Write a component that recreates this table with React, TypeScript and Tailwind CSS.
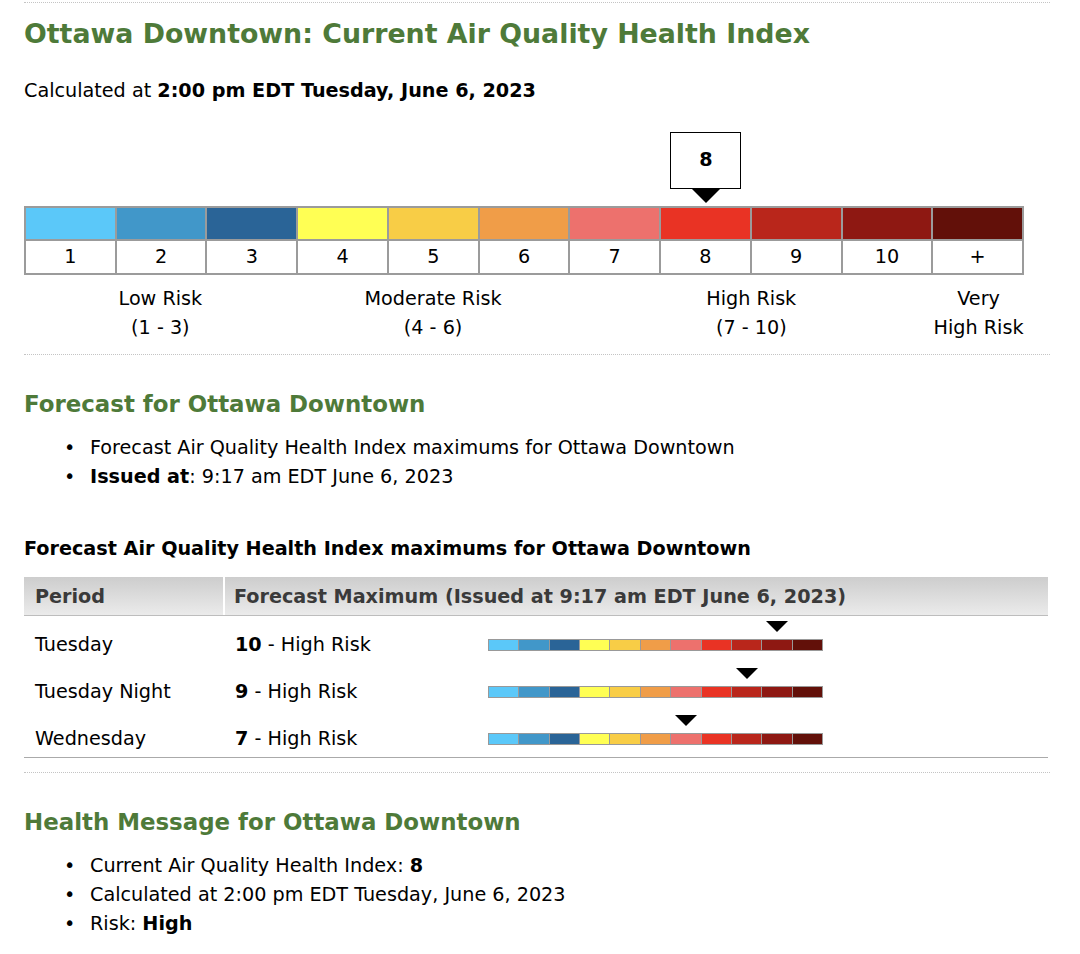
const colors = [
  'bg-[#5bc8f9]',
  'bg-[#4197c9]',
  'bg-[#2a6497]',
  'bg-[#ffff54]',
  'bg-[#f8cd46]',
  'bg-[#f09d48]',
  'bg-[#ed716d]',
  'bg-[#e93324]',
  'bg-[#b9261b]',
  'bg-[#8e1812]',
  'bg-[#621009]',
];

const labels = ['1', '2', '3', '4', '5', '6', '7', '8', '9', '10', '+'];

const colStart: Record<number, string> = {
  7: 'col-start-7',
  8: 'col-start-8',
  9: 'col-start-9',
  10: 'col-start-10',
};

const forecast = [
  { period: 'Tuesday', value: 10 },
  { period: 'Tuesday Night', value: 9 },
  { period: 'Wednesday', value: 7 },
];

function Dotted() {
  return <div className="h-0 border-t border-dotted border-[#c4c4c4]" />;
}

function Bullets({ items }: { items: React.ReactNode[] }) {
  return (
    <ul className="mt-[14px] pl-[40px] leading-[29px]">
      {items.map((item, i) => (
        <li key={i} className="flex">
          <span className="w-[26px] shrink-0">•</span>
          <span>{item}</span>
        </li>
      ))}
    </ul>
  );
}

function MiniScale({ value }: { value: number }) {
  return (
    <div className="w-[335px] pt-[5px]">
      <div className="grid grid-cols-11 h-[11px]">
        <div className={`${colStart[value]} flex justify-center`}>
          <div className="w-0 h-0 border-l-[11px] border-r-[11px] border-t-[11px] border-l-transparent border-r-transparent border-t-black" />
        </div>
      </div>
      <div className="mt-[7px] grid grid-cols-11 gap-[1px] p-[1px] bg-[#999] h-[12px]">
        {colors.map((c) => (
          <div key={c} className={c} />
        ))}
      </div>
    </div>
  );
}

export default function App() {
  return (
    <div className="w-[1080px] min-h-[954px] bg-white text-black font-['Verdana','DejaVu_Sans',sans-serif] text-[19.2px]">
      <div className="ml-[24px] w-[1026px] pt-[2px]">
        <Dotted />
        <h1 className="mt-[14px] text-[26.8px] leading-[34px] font-bold text-[#4e7a39]">
          Ottawa Downtown: Current Air Quality Health Index
        </h1>
        <p className="mt-[26px] leading-[28px]">
          Calculated at <b>2:00 pm EDT Tuesday, June 6, 2023</b>
        </p>

        {/* current index scale */}
        <div className="mt-[27px] w-[1000px]">
          <div className="grid grid-cols-11 h-[74px]">
            <div className="col-start-8 flex flex-col items-center">
              <div className="w-[71px] h-[57px] border border-black flex items-center justify-center font-bold">
                8
              </div>
              <div className="w-0 h-0 border-l-[14px] border-r-[14px] border-t-[14px] border-l-transparent border-r-transparent border-t-black" />
            </div>
          </div>
          <div className="grid grid-cols-11 gap-[2px] p-[2px] bg-[#9b9b9b]">
            {colors.map((c) => (
              <div key={c} className={`${c} h-[31px]`} />
            ))}
            {labels.map((l) => (
              <div key={l} className="bg-white h-[32px] pt-[1px] flex items-center justify-center">
                {l}
              </div>
            ))}
          </div>
          <div className="mt-[9px] grid grid-cols-11 text-center leading-[29px]">
            <div className="col-span-3">
              Low Risk
              <br />
              (1 - 3)
            </div>
            <div className="col-span-3">
              Moderate Risk
              <br />
              (4 - 6)
            </div>
            <div className="col-span-4">
              High Risk
              <br />
              (7 - 10)
            </div>
            <div>
              Very
              <br />
              High Risk
            </div>
          </div>
        </div>

        <div className="mt-[12px]">
          <Dotted />
        </div>

        {/* forecast */}
        <h2 className="mt-[34px] text-[22.9px] leading-[30px] font-bold text-[#4e7a39]">
          Forecast for Ottawa Downtown
        </h2>
        <Bullets
          items={[
            'Forecast Air Quality Health Index maximums for Ottawa Downtown',
            <>
              <b>Issued at</b>: 9:17 am EDT June 6, 2023
            </>,
          ]}
        />

        <h3 className="mt-[44px] font-bold leading-[28px]">
          Forecast Air Quality Health Index maximums for Ottawa Downtown
        </h3>

        <div className="mt-[14px] w-[1024px] border-b border-[#aaa]">
          <div className="flex h-[39px] bg-gradient-to-b from-[#cdcdcd] to-[#ebebeb] border-b border-[#bdbdbd] font-bold text-[#3a3a3a]">
            <div className="w-[201px] px-[11px] pt-[3px] flex items-center border-r-2 border-white">Period</div>
            <div className="flex-1 px-[9px] pt-[3px] flex items-center">
              Forecast Maximum (Issued at 9:17 am EDT June 6, 2023)
            </div>
          </div>
          {forecast.map((f) => (
            <div key={f.period} className="flex h-[47px]">
              <div className="w-[201px] px-[11px] pt-[15px] leading-[28px]">{f.period}</div>
              <div className="flex-1 pl-[10px] flex">
                <div className="w-[253px] pt-[15px] leading-[28px]">
                  <b>{f.value}</b> - High Risk
                </div>
                <MiniScale value={f.value} />
              </div>
            </div>
          ))}
        </div>

        <div className="mt-[14px]">
          <Dotted />
        </div>

        {/* health message */}
        <h2 className="mt-[34px] text-[22.9px] leading-[30px] font-bold text-[#4e7a39]">
          Health Message for Ottawa Downtown
        </h2>
        <Bullets
          items={[
            <>
              Current Air Quality Health Index: <b>8</b>
            </>,
            'Calculated at 2:00 pm EDT Tuesday, June 6, 2023',
            <>
              Risk: <b>High</b>
            </>,
          ]}
        />
      </div>
    </div>
  );
}
